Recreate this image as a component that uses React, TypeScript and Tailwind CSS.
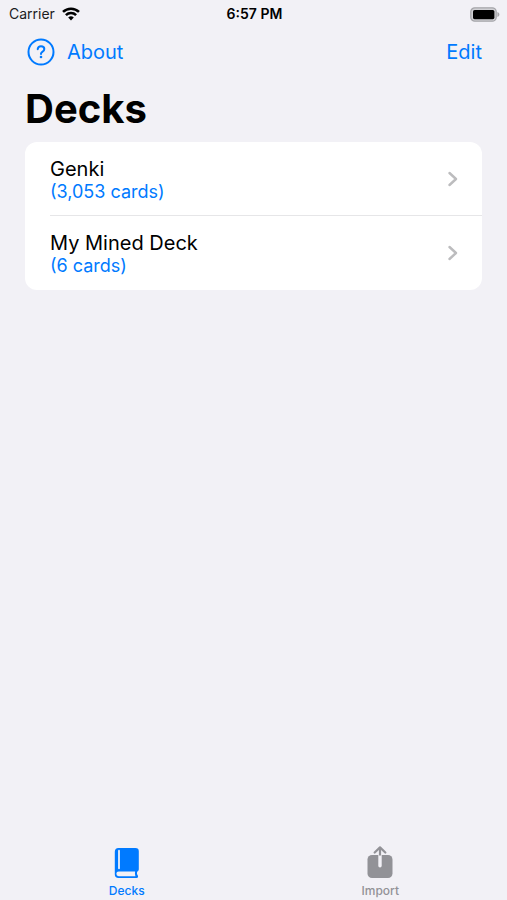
type Deck = {
  name: string
  cards: string
}

const decks: Deck[] = [
  { name: 'Genki', cards: '(3,053 cards)' },
  { name: 'My Mined Deck', cards: '(6 cards)' },
]

const WifiIcon = () => (
  <svg width="18" height="14" viewBox="0 0 18 14" fill="none" stroke="#000" strokeWidth="2.6" aria-hidden="true">
    <path d="M1 4.900a11.600 11.600 0 0 1 16 0" />
    <path d="M3.900 8.100a7.400 7.400 0 0 1 10.200 0" />
    <path d="M9 13.400 6.200 10.600a4 4 0 0 1 5.600 0Z" fill="#000" stroke="none" />
  </svg>
)

const BatteryIcon = () => (
  <svg width="30" height="15" viewBox="0 0 30 15" aria-hidden="true">
    <rect x="0.8" y="0.8" width="25.4" height="13.4" rx="4" fill="#d0d0d4" stroke="#a5a5a9" strokeWidth="1.3" />
    <rect x="3" y="3" width="21.4" height="9.2" rx="1.6" fill="#000" />
    <path d="M27.4 5c1.3.4 2 1.4 2 2.5s-.7 2.1-2 2.5Z" fill="#a5a5a9" />
  </svg>
)

const HelpIcon = () => (
  <svg width="28" height="28" viewBox="0 0 28 28" fill="none" stroke="currentColor" strokeWidth="2" aria-hidden="true">
    <circle cx="14" cy="14" r="12.5" />
    <path d="M10.7 11.2c.2-1.8 1.5-2.9 3.300-2.900 1.900 0 3.300 1.100 3.300 2.700 0 1.200-.6 1.900-1.700 2.600-1.100.7-1.600 1.200-1.600 2.200v.2" strokeLinecap="round" />
    <circle cx="14" cy="19" r="1.3" fill="currentColor" stroke="none" />
  </svg>
)

const ChevronIcon = () => (
  <svg width="10" height="16" viewBox="0 0 10 16" fill="none" stroke="#bcbcbe" strokeWidth="2.4" strokeLinecap="round" strokeLinejoin="round" aria-hidden="true">
    <path d="M1.5 2 8 8l-6.500 6" />
  </svg>
)

const BookIcon = () => (
  <svg width="26" height="34" viewBox="0 0 26 34" aria-hidden="true">
    <path d="M4.5 2H21.500A3.300 3.300 0 0 1 24.800 5.300V23.200c0 1.200-.7 2.100-1.600 2.500-.4 1.300-.3 2.500.6 3.800.7 1 .2 2.500-1.200 2.500H4.500A3.800 3.800 0 0 1 .8 28.200V5.800A3.800 3.800 0 0 1 4.500 2Z" fill="#007aff" />
    <path d="M4.700 25.500h16.400c-.3 1.600-.2 3.100.3 4.700H4.700a2.350 2.350 0 0 1 0-4.700Z" fill="#f2f1f6" />
    <path d="M5 4.700v17.600" stroke="#d5e5fa" strokeWidth="2" strokeLinecap="round" />
  </svg>
)

const ShareIcon = () => (
  <svg width="26" height="34" viewBox="0 0 26 34" fill="none" aria-hidden="true">
    <rect x="0.5" y="9" width="25" height="23" rx="4.5" fill="#929297" />
    <path d="M13 8.500V19.700" stroke="#f2f1f6" strokeWidth="3.400" strokeLinecap="round" />
    <path d="M13 9.500V2" stroke="#929297" strokeWidth="2.200" />
    <path d="M7.700 6.500 13 1.400l5.300 5.100" stroke="#929297" strokeWidth="2.200" strokeLinecap="round" strokeLinejoin="round" />
  </svg>
)

const StatusBar = () => (
  <div className="grid h-7 grid-cols-3 items-center pl-[9px] pr-[7px] text-sm text-[#1c1c1e]">
    <div className="flex items-center gap-[7px]">
      <span>Carrier</span>
      <WifiIcon />
    </div>
    <div className="text-center font-semibold text-black">6:57 PM</div>
    <div className="flex justify-end">
      <BatteryIcon />
    </div>
  </div>
)

const DeckRow = ({ name, cards }: Deck) => (
  <li className="group pl-[25px]">
    <a
      href="#deck"
      className="flex h-[74px] items-center justify-between border-b border-[#e6e6e8] pr-6 group-last:border-b-0"
    >
      <div className="flex flex-col pt-0.5">
        <span className="text-xl leading-6 text-black">{name}</span>
        <span className="text-lg leading-[22px] text-[#007aff]">{cards}</span>
      </div>
      <ChevronIcon />
    </a>
  </li>
)

export default function App() {
  return (
    <div className="flex min-h-screen flex-col bg-[#f2f1f6] font-['Inter',sans-serif]">
      <StatusBar />
      <header className="flex h-12 items-center justify-between px-[25px] text-xl text-[#007aff]">
        <button type="button" className="flex items-center gap-3 pl-0.5">
          <HelpIcon />
          <span>About</span>
        </button>
        <button type="button">Edit</button>
      </header>

      <main className="flex-1 px-[25px]">
        <h1 className="pt-[9px] text-[40px] font-bold leading-[48px] text-black">Decks</h1>
        <ul className="mt-[9px] overflow-hidden rounded-xl bg-white">
          {decks.map(deck => (
            <DeckRow key={deck.name} name={deck.name} cards={deck.cards} />
          ))}
        </ul>
      </main>

      <nav className="grid grid-cols-2 pb-px text-xs font-medium leading-4">
        <a href="#decks" aria-current="page" className="flex flex-col items-center gap-[3px] text-[#007aff]">
          <BookIcon />
          <span>Decks</span>
        </a>
        <a href="#import" className="flex flex-col items-center gap-[3px] text-[#929297]">
          <ShareIcon />
          <span>Import</span>
        </a>
      </nav>
    </div>
  )
}
